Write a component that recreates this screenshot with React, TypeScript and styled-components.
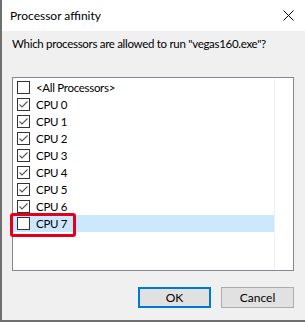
import React from 'react';
import styled, { createGlobalStyle } from 'styled-components';

const GlobalStyle = createGlobalStyle`
  html, body {
    margin: 0;
    padding: 0;
    background: #f0f0f0;
  }
  * {
    box-sizing: border-box;
  }
`;

const Window = styled.div`
  width: 305px;
  height: 322px;
  background: #f0f0f0;
  border-left: 2px solid #6f6f6f;
  border-bottom: 2px solid #6f6f6f;
  display: flex;
  flex-direction: column;
  font-family: Lato, 'Noto Sans', sans-serif;
  font-size: 11.5px;
  letter-spacing: -0.3px;
  color: #000;
  white-space: nowrap;
`;

const TitleBar = styled.div`
  height: 31px;
  flex-shrink: 0;
  background: #fff;
  display: flex;
  align-items: center;
  justify-content: space-between;
  padding: 0 11px 0 8px;
  font-size: 12px;
  letter-spacing: 0;
`;

const CloseIcon = styled.svg`
  width: 11px;
  height: 11px;
`;

const Body = styled.div`
  flex: 1;
  padding: 5px 10px 0 10px;
  display: flex;
  flex-direction: column;
`;

const Prompt = styled.div`
  line-height: 16px;
  height: 16px;
`;

const ListBox = styled.div`
  margin-top: 25px;
  width: 282px;
  height: 194px;
  flex-shrink: 0;
  background: #fff;
  border: 1px solid #828790;
  padding: 1px 0;
  display: flex;
`;

const Column = styled.div`
  width: 262px;
  border-right: 1px solid #f0f0f0;
  display: flex;
  flex-direction: column;
`;

const Row = styled.div<{ $selected?: boolean }>`
  height: 17px;
  flex-shrink: 0;
  display: flex;
  align-items: center;
  gap: 6px;
  padding-left: 4px;
  background: ${(p) => (p.$selected ? '#cce8ff' : 'transparent')};
  line-height: 17px;
  position: relative;
`;

const Highlight = styled.div`
  position: absolute;
  left: -3px;
  top: -2px;
  width: 66px;
  height: 24px;
  border: 3px solid #e2001a;
  border-radius: 3px;
  pointer-events: none;
`;

const ButtonRow = styled.div`
  margin-top: 16px;
  display: flex;
  justify-content: flex-end;
  gap: 10px;
  padding-right: 1px;
`;

const Button = styled.div<{ $default?: boolean }>`
  width: 73px;
  height: 21px;
  background: #e1e1e1;
  border: ${(p) => (p.$default ? '2px solid #0078d7' : '1px solid #adadad')};
  display: flex;
  align-items: center;
  justify-content: center;
  font-size: 12px;
  letter-spacing: 0;
`;

function CheckBox({ checked }: { checked: boolean }) {
  return (
    <svg width="13" height="13" viewBox="0 0 13 13">
      <rect x="0.5" y="0.5" width="12" height="12" fill="#fff" stroke="#333" />
      {checked && (
        <polyline
          points="2.5,6.5 5,9 10.5,3.5"
          fill="none"
          stroke="#555"
          strokeWidth="1.1"
        />
      )}
    </svg>
  );
}

const items = [
  { label: '<All Processors>', checked: false },
  { label: 'CPU 0', checked: true },
  { label: 'CPU 1', checked: true },
  { label: 'CPU 2', checked: true },
  { label: 'CPU 3', checked: true },
  { label: 'CPU 4', checked: true },
  { label: 'CPU 5', checked: true },
  { label: 'CPU 6', checked: true },
  { label: 'CPU 7', checked: false, selected: true },
];

export default function App() {
  return (
    <>
      <GlobalStyle />
      <Window>
        <TitleBar>
          <span>Processor affinity</span>
          <CloseIcon viewBox="0 0 11 11">
            <path d="M0.5 0.5 L10.5 10.5 M10.5 0.5 L0.5 10.5" stroke="#000" strokeWidth="1" />
          </CloseIcon>
        </TitleBar>
        <Body>
          <Prompt>Which processors are allowed to run "vegas160.exe"?</Prompt>
          <ListBox>
            <Column>
              {items.map((it) => (
                <Row key={it.label} $selected={it.selected}>
                  <CheckBox checked={it.checked} />
                  <span>{it.label}</span>
                  {it.selected && <Highlight />}
                </Row>
              ))}
            </Column>
          </ListBox>
          <ButtonRow>
            <Button $default>OK</Button>
            <Button>Cancel</Button>
          </ButtonRow>
        </Body>
      </Window>
    </>
  );
}
